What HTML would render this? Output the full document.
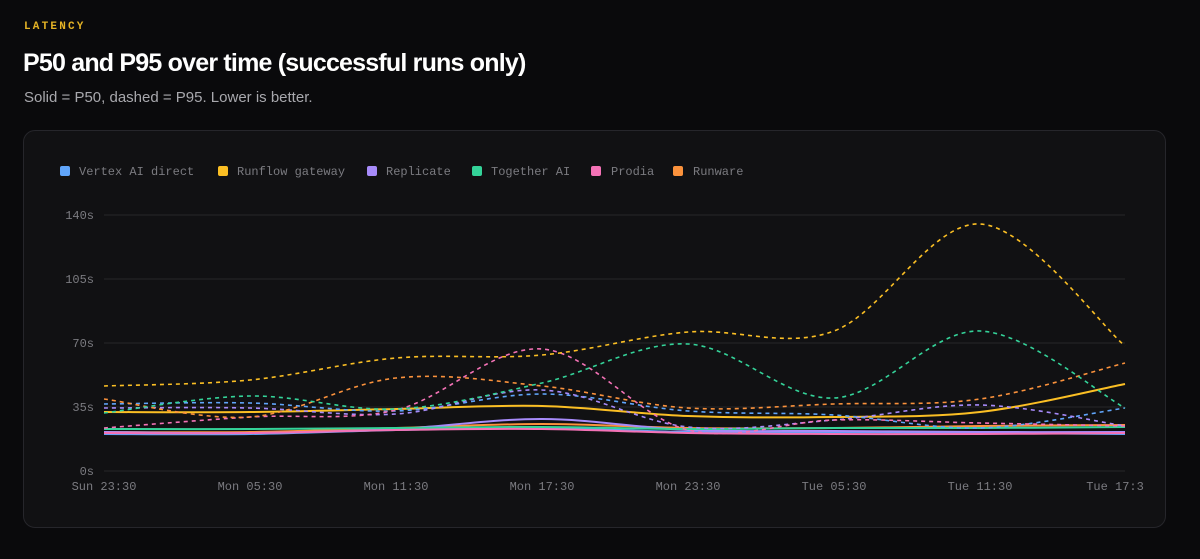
<!DOCTYPE html>
<html><head><meta charset="utf-8"><style>
html,body{margin:0;padding:0;background:#0a0a0c;width:1200px;height:559px;overflow:hidden;font-family:"Liberation Sans",sans-serif}
.k{position:absolute;left:24px;top:21px;font-size:11px;font-weight:bold;letter-spacing:2.2px;color:#e4b325;font-family:"Liberation Mono",monospace}
.t{position:absolute;left:23px;top:49px;font-size:25px;font-weight:bold;color:#fff;letter-spacing:-0.8px}
.s{position:absolute;left:24px;top:89px;font-size:15px;color:#a8a8ad}
.card{position:absolute;left:23px;top:130px;width:1141px;height:396px;border:1px solid #26262b;border-radius:12px;background:#111113}
svg{position:absolute;left:0;top:0}
text{font-family:"Liberation Mono",monospace;font-size:12px;fill:#7b7b80}
</style></head><body>
<div class="k">LATENCY</div>
<div class="t">P50 and P95 over time (successful runs only)</div>
<div class="s">Solid = P50, dashed = P95. Lower is better.</div>
<div class="card"></div>
<svg id="c" width="1200" height="559" xmlns="http://www.w3.org/2000/svg">
<g stroke="#262629" stroke-width="1">
<line x1="104" x2="1125" y1="215" y2="215"/><line x1="104" x2="1125" y1="279" y2="279"/>
<line x1="104" x2="1125" y1="343" y2="343"/><line x1="104" x2="1125" y1="407" y2="407"/>
<line x1="104" x2="1125" y1="471" y2="471"/></g>
<g text-anchor="end"><text x="94" y="219">140s</text><text x="94" y="283">105s</text><text x="94" y="347">70s</text><text x="94" y="411">35s</text><text x="94" y="475">0s</text></g>
<g text-anchor="middle"><text x="104" y="490">Sun 23:30</text><text x="250" y="490">Mon 05:30</text><text x="396" y="490">Mon 11:30</text><text x="542" y="490">Mon 17:30</text><text x="688" y="490">Mon 23:30</text><text x="834" y="490">Tue 05:30</text><text x="980" y="490">Tue 11:30</text><text x="1115" y="490">Tue 17:3</text></g>
<g>
<rect x="60" y="166" width="10" height="10" rx="2" fill="#60a5fa"/><text x="79" y="175">Vertex AI direct</text>
<rect x="218" y="166" width="10" height="10" rx="2" fill="#fbbf24"/><text x="237" y="175">Runflow gateway</text>
<rect x="367" y="166" width="10" height="10" rx="2" fill="#a78bfa"/><text x="386" y="175">Replicate</text>
<rect x="472" y="166" width="10" height="10" rx="2" fill="#34d399"/><text x="491" y="175">Together AI</text>
<rect x="591" y="166" width="10" height="10" rx="2" fill="#f472b6"/><text x="611" y="175">Prodia</text>
<rect x="673" y="166" width="10" height="10" rx="2" fill="#fb923c"/><text x="693" y="175">Runware</text>
</g>
<g id="lines" fill="none"></g>
</svg>
<script>
var X=[104,250,396,542,688,834,980,1125];
var S=[
["#fb923c",[432,432,428,424,428,428,426,425],0],
["#60a5fa",[434,434,430,428,432,432,433,434],0],
["#a78bfa",[432,433,429,419,430,431,432,432],0],
["#34d399",[429,429,428,427,429,428,428,427],0],
["#f472b6",[433,433,430,429,433,434,434,433],0],
["#fbbf24",[412,412,409,406,416,417,412,384],0],
["#60a5fa",[404,403,411,394,411,415,428,408],1],
["#a78bfa",[408,408,414,390,427,420,405,426],1],
["#f472b6",[428,417,410,349,430,420,423,426],1],
["#fb923c",[399,417,378,386,408,404,399,363],1],
["#34d399",[413,396,409,383,344,398,331,408],1],
["#fbbf24",[386,380,358,355,332,331,224,346],1]];
var g=document.getElementById('lines'),h='';
S.forEach(function(s){var y=s[1],d='M'+X[0]+','+y[0];
for(var i=0;i<7;i++){var p0=i?i-1:0,p3=i<6?i+2:7;
var c1x=X[i]+(X[i+1]-X[p0])/6,c1y=y[i]+(y[i+1]-y[p0])/6,c2x=X[i+1]-(X[p3]-X[i])/6,c2y=y[i+1]-(y[p3]-y[i])/6;
d+=' C'+c1x+','+c1y+' '+c2x+','+c2y+' '+X[i+1]+','+y[i+1];}
h+='<path d="'+d+'" stroke="'+s[0]+'" stroke-width="'+(s[2]?1.6:2)+'"'+(s[2]?' stroke-dasharray="4 4"':'')+'/>';});
g.innerHTML=h;
</script>
</body></html>
